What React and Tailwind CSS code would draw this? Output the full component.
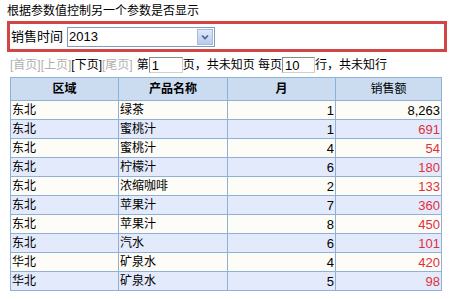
import React from "react";

const rows = [
  ["东北", "绿茶", 1, "8,263", false],
  ["东北", "蜜桃汁", 1, "691", true],
  ["东北", "蜜桃汁", 4, "54", true],
  ["东北", "柠檬汁", 6, "180", true],
  ["东北", "浓缩咖啡", 2, "133", true],
  ["东北", "苹果汁", 7, "360", true],
  ["东北", "苹果汁", 8, "450", true],
  ["东北", "汽水", 6, "101", true],
  ["华北", "矿泉水", 4, "420", true],
  ["华北", "矿泉水", 5, "98", true],
];

const font = { fontFamily: '"Liberation Sans", "Noto Sans CJK SC", sans-serif' };

const App = () => {
  return (
    <div className="w-[474px] h-[299px] bg-white text-[12px] text-black" style={font}>
      <div className="pl-[7px] pt-[4px] h-[21px] leading-[14px]">根据参数值控制另一个参数是否显示</div>

      <div className="ml-[7px] w-[440px] h-[31px] border-[3px] border-[#d24545] flex items-center pl-[1px]">
        <span className="text-[13px] mr-[4px]">销售时间</span>
        <div className="w-[148px] h-[20px] border border-[#7f9db9] flex items-center justify-between">
          <span className="text-[13px] pl-[1px] leading-none">2013</span>
          <div className="w-[16px] h-[16px] mr-[1px] bg-gradient-to-b from-[#dfe9fb] to-[#b7cbef] border border-[#a5bcdf] flex items-center justify-center">
            <svg width="8" height="6" viewBox="0 0 8 6">
              <path d="M1 1.5 L4 4.5 L7 1.5" stroke="#4d6185" strokeWidth="1.6" fill="none" />
            </svg>
          </div>
        </div>
      </div>

      <div className="flex items-center pl-[10px] mt-[4px] h-[18px] whitespace-nowrap">
        <span className="text-[#b0b0b0]">[首页][上页]</span>
        <span>[下页]</span>
        <span className="text-[#b0b0b0]">[尾页]</span>
        <span className="ml-[4px]">第</span>
        <div className="w-[34px] h-[16px] border border-[#8a8a8a] border-r-[#d0d0d0] border-b-[#d0d0d0] text-[13px] leading-[15px] pl-[2px]">1</div>
        <span>页，共未知页 每页</span>
        <div className="w-[33px] h-[16px] border border-[#8a8a8a] border-r-[#d0d0d0] border-b-[#d0d0d0] text-[13px] leading-[15px] pl-[2px]">10</div>
        <span>行，共未知行</span>
      </div>

      <table className="ml-[10px] mt-[3px] w-[432px] border-collapse table-fixed text-[12px]">
        <thead>
          <tr className="bg-[#cbdcf1] h-[23px]">
            <th className="border border-[#8fb1d6] font-bold w-[108px]">区域</th>
            <th className="border border-[#8fb1d6] font-bold w-[109px]">产品名称</th>
            <th className="border border-[#8fb1d6] font-bold w-[108px]">月</th>
            <th className="border border-[#8fb1d6] font-normal">销售额</th>
          </tr>
        </thead>
        <tbody>
          {rows.map((r, i) => (
            <tr key={i} className={`h-[19px] ${i % 2 === 0 ? "bg-[#fdfcf7]" : "bg-[#e3eafc]"}`}>
              <td className="border border-[#8fb1d6] pl-[1px] leading-[17px]">{r[0]}</td>
              <td className="border border-[#8fb1d6] pl-[1px] leading-[17px]">{r[1]}</td>
              <td className="border border-[#8fb1d6] text-right pr-[1px] text-[13px] leading-[17px]">{r[2]}</td>
              <td className={`border border-[#8fb1d6] text-right pr-[1px] text-[13px] leading-[17px] ${r[4] ? "text-[#e0303b]" : ""}`}>
                {r[3]}
              </td>
            </tr>
          ))}
        </tbody>
      </table>
    </div>
  );
};

export default App;
